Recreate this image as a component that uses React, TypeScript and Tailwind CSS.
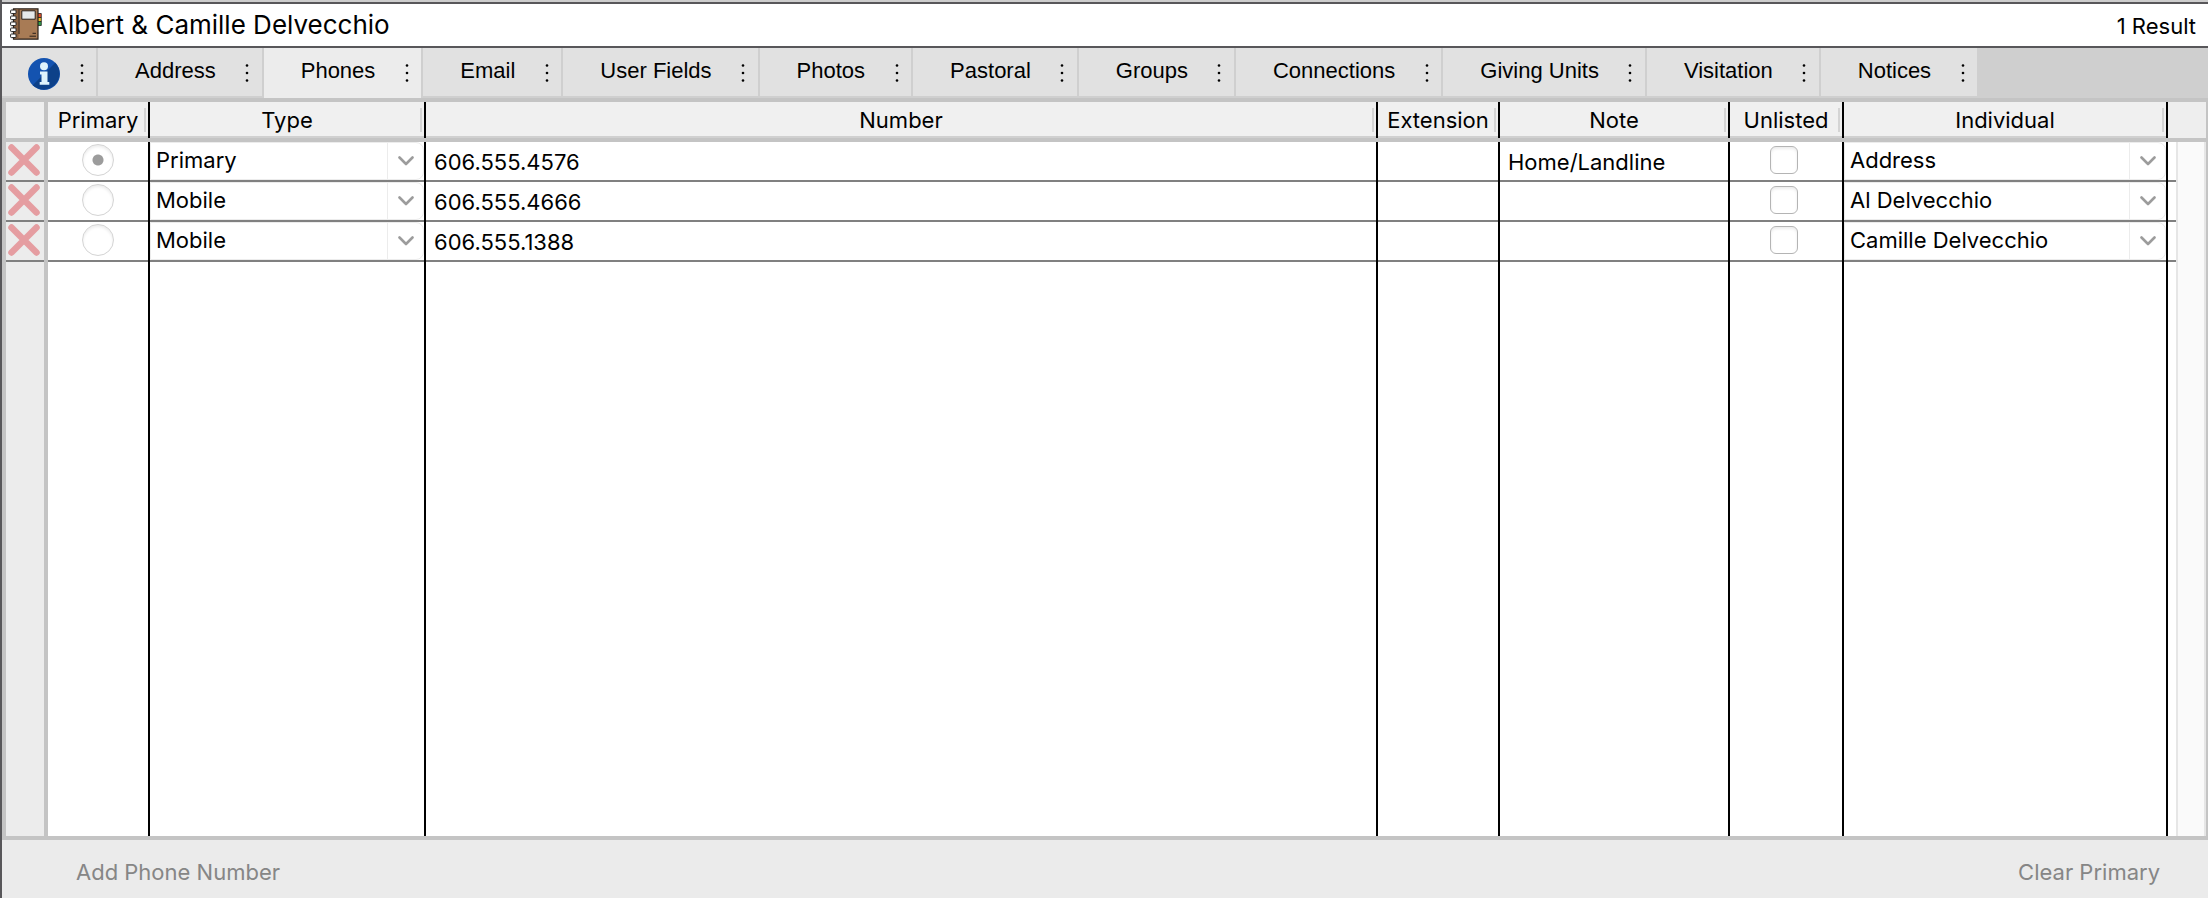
import { useState } from "react";

type Phone = {
  id: number;
  type: string;
  number: string;
  extension: string;
  note: string;
  individual: string;
};

const tabs = [
  "Address",
  "Phones",
  "Email",
  "User Fields",
  "Photos",
  "Pastoral",
  "Groups",
  "Connections",
  "Giving Units",
  "Visitation",
  "Notices",
];

const columns = ["Primary", "Type", "Number", "Extension", "Note", "Unlisted", "Individual"];

const phones: Phone[] = [
  { id: 1, type: "Primary", number: "606.555.4576", extension: "", note: "Home/Landline", individual: "Address" },
  { id: 2, type: "Mobile", number: "606.555.4666", extension: "", note: "", individual: "Al Delvecchio" },
  { id: 3, type: "Mobile", number: "606.555.1388", extension: "", note: "", individual: "Camille Delvecchio" },
];

const types = ["Primary", "Mobile"];
const individuals = ["Address", "Al Delvecchio", "Camille Delvecchio"];

function NotebookIcon() {
  return (
    <svg viewBox="0 0 32 32" className="size-8 shrink-0" aria-hidden="true">
      <path d="M27.500 5.500h3.800v4h-3.800z" fill="#e8502a" stroke="#222" strokeWidth="0.800" />
      <path d="M27.500 9.500h3.800v4h-3.800z" fill="#f2c230" stroke="#222" strokeWidth="0.800" />
      <path d="M27.500 13.500h3.800v4h-3.800z" fill="#2fa04a" stroke="#222" strokeWidth="0.800" />
      <path d="M3.500.8h24.500v30.400H3.500z" fill="#a87b55" stroke="#2a211b" strokeWidth="1.200" />
      <path d="M4.200 1.500H8.500v29H4.200z" fill="#8a6242" />
      <path d="M9 1.500V26" stroke="#2a211b" />
      <path d="M11.800 2.800h13.400v8.400H11.800z" fill="#e6e9ea" stroke="#2a211b" />
      <path d="M22.500 25.300h3.500M19.500 28.200h6.500" stroke="#2a211b" />
      {[2, 8, 14, 20, 26].map((y) => (
        <rect key={y} x="0.600" y={y} width="5.400" height="3.600" rx="0.800" fill="#fff" stroke="#222" />
      ))}
    </svg>
  );
}

function InfoIcon() {
  return (
    <svg viewBox="0 0 32 32" className="size-8" aria-hidden="true">
      <circle cx="16" cy="16" r="16" fill="#1453b0" />
      <path d="M27.300 4.700A16 16 0 0 1 4.700 27.300z" fill="#0d4189" />
      <circle cx="16" cy="8.200" r="4" fill="#dff3fc" />
      <path d="M12 13.500h7.500V24h1.800v2.800h-9.600V24h1.800v-7.600H12z" fill="#dff3fc" />
    </svg>
  );
}

function Kebab({ label }: { label: string }) {
  return (
    <button type="button" aria-label={label} className="flex w-[29px] items-center justify-center pt-0.5">
      <svg viewBox="0 0 4 20" className="h-5 w-1" aria-hidden="true">
        <circle cx="2" cy="2.500" r="1.300" />
        <circle cx="2" cy="10" r="1.300" />
        <circle cx="2" cy="17.500" r="1.300" />
      </svg>
    </button>
  );
}

function Combo({ label, value, options }: { label: string; value: string; options: string[] }) {
  return (
    <div className="relative h-[38px] rounded-r-lg border border-[#ececec]">
      <select
        aria-label={label}
        defaultValue={value}
        className="h-full w-full appearance-none bg-transparent pr-10 pb-0.5 pl-[5px] text-[22px] leading-7 outline-none"
      >
        {options.map((o) => (
          <option key={o}>{o}</option>
        ))}
      </select>
      <span className="pointer-events-none absolute inset-y-0 right-0 flex w-9 items-center justify-center border-l border-[#ececec]">
        <svg viewBox="0 0 16 10" className="h-2.5 w-4" fill="none" aria-hidden="true">
          <path d="M1.500 1.500 8 8l6.500-6.500" stroke="#9c9c9c" strokeWidth="2.600" strokeLinecap="round" strokeLinejoin="round" />
        </svg>
      </span>
    </div>
  );
}

const cell = "h-10 border-r-2 border-black p-0 pb-0.5 shadow-[inset_0_-2px_0_#808080]";
const field = "block h-[38px] w-full bg-transparent pt-0.5 pl-2 text-[22px] leading-7 outline-none";

export default function App() {
  const [active, setActive] = useState("Phones");
  const [primary, setPrimary] = useState(1);

  return (
    <div className="flex min-h-screen flex-col border-l-2 border-[#58575a] bg-[#ebebeb] font-['Inter',sans-serif] text-[22px] leading-7 text-black">
      <header className="flex h-12 items-center border-t-2 border-b-2 border-t-[#cdcdcd] border-b-[#58575a] bg-white pr-3 pl-2 shadow-[inset_0_2px_0_#58575a]">
        <NotebookIcon />
        <h1 className="grow pt-0.5 pl-2 text-[26px] leading-8">Albert &amp; Camille Delvecchio</h1>
        <span className="pt-1">1 Result</span>
      </header>

      <nav className="flex h-[50px] border-b-2 border-[#cfcfcf] bg-[#cfcfcf] font-['Liberation_Sans',sans-serif]">
        <div className="flex border-r-2 border-[#cfcfcf] bg-[#e1e1e1]">
          <button type="button" aria-label="Information" className="pt-1 pr-[7px] pl-[26px]">
            <InfoIcon />
          </button>
          <Kebab label="Information menu" />
        </div>
        {tabs.map((tab) => (
          <div
            key={tab}
            className={
              tab === active
                ? "-mb-0.5 flex border-r-2 border-[#cfcfcf] bg-[#ececec] pb-0.5"
                : "flex border-r-2 border-[#cfcfcf] bg-[#e1e1e1]"
            }
          >
            <button type="button" onClick={() => setActive(tab)} className="pr-[17px] pb-0.5 pl-[37px] whitespace-nowrap">
              {tab}
            </button>
            <Kebab label={`${tab} menu`} />
          </div>
        ))}
      </nav>

      <main className="grid grow border-y-4 border-r-2 border-l-4 border-[#c4c4c4] bg-white">
        <table className="h-full w-full table-fixed border-separate border-spacing-0">
          <colgroup>
            <col className="w-[42px]" />
            <col className="w-[102px]" />
            <col className="w-[276px]" />
            <col />
            <col className="w-[122px]" />
            <col className="w-[230px]" />
            <col className="w-[114px]" />
            <col className="w-[324px]" />
            <col className="w-2" />
            <col className="w-[30px]" />
          </colgroup>
          <thead>
            <tr className="h-10">
              <td className="border-r-4 border-b-4 border-[#c4c4c4] bg-[#eeeeee] p-0" />
              {columns.map((c) => (
                <th key={c} scope="col" className="border-b-4 border-[#c4c4c4] p-0 font-normal">
                  <div className="flex h-9 items-center border-r-2 border-black bg-[#f0f0f0] px-0.5 shadow-[inset_0_-2px_0_#d0d0d0]">
                    <span className="-mr-0.5 grow">{c}</span>
                    <span className="h-6 w-0.5 bg-[#d4d4d4]" />
                  </div>
                </th>
              ))}
              <td colSpan={2} className="border-b-4 border-[#c4c4c4] bg-[#eeeeee] p-0" />
            </tr>
          </thead>
          <tbody>
            {phones.map((p, i) => (
              <tr key={p.id} className="h-10">
                <td className="h-10 border-r-4 border-[#c4c4c4] bg-[#ececec] p-0 pb-1 shadow-[inset_0_-2px_0_#808080]">
                  <button type="button" aria-label={`Delete ${p.number}`} className="block pl-0.5">
                    <svg viewBox="0 0 32 32" className="size-8" aria-hidden="true">
                      <path d="M3.500 3.500l25 25M28.500 3.500l-25 25" stroke="#e59da1" strokeWidth="6.500" strokeLinecap="round" />
                    </svg>
                  </button>
                </td>
                <td className={cell}>
                  <input
                    type="radio"
                    name="primary"
                    aria-label={`${p.number} is primary`}
                    checked={primary === p.id}
                    onChange={() => setPrimary(p.id)}
                    className="mx-auto mb-0.5 block size-8 appearance-none rounded-full border border-[#d4d4d4] bg-white shadow-[inset_0_2px_3px_#ececec] checked:bg-[radial-gradient(circle,#9c9c9c_5px,transparent_6px)]"
                  />
                </td>
                <td className={cell}>
                  <Combo label={`Type of ${p.number}`} value={p.type} options={types} />
                </td>
                <td className={cell}>
                  <input aria-label="Number" defaultValue={p.number} className={field} />
                </td>
                <td className={cell}>
                  <input aria-label="Extension" defaultValue={p.extension} className={field} />
                </td>
                <td className={cell}>
                  <input aria-label="Note" defaultValue={p.note} className={field} />
                </td>
                <td className={cell}>
                  <div className="flex justify-center pr-1 pb-0.5">
                    <input
                      type="checkbox"
                      aria-label={`${p.number} is unlisted`}
                      className="size-7 appearance-none rounded-md border border-[#b4b4b4] bg-white shadow-[inset_0_2px_3px_#ececec] checked:bg-[#9c9c9c]"
                    />
                  </div>
                </td>
                <td className={cell}>
                  <Combo label={`Individual for ${p.number}`} value={p.individual} options={individuals} />
                </td>
                <td className="p-0 shadow-[inset_0_-2px_0_#808080]" />
                {i === 0 && (
                  <td rowSpan={phones.length + 1} className="border-x-2 border-[#e6e6e6] bg-[#fafafa] p-0" />
                )}
              </tr>
            ))}
            <tr>
              <td className="border-r-4 border-[#c4c4c4] bg-[#ececec] p-0" />
              {columns.map((c) => (
                <td key={c} className="border-r-2 border-black p-0" />
              ))}
              <td className="p-0" />
            </tr>
          </tbody>
        </table>
      </main>

      <footer className="flex h-[58px] items-center justify-between pt-1.5 pr-12 pl-[74px] text-[#868686]">
        <button type="button">Add Phone Number</button>
        <button type="button">Clear Primary</button>
      </footer>
    </div>
  );
}
